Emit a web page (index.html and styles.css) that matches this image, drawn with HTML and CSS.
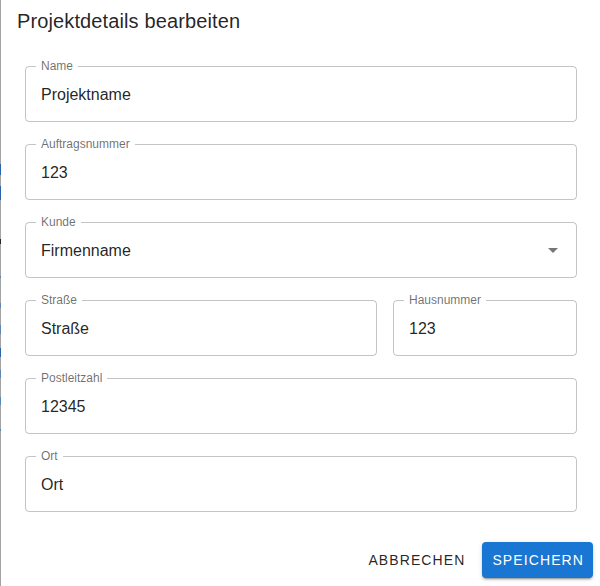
FILE: index.html
```html
<!DOCTYPE html>
<html lang="de">
<head>
<meta charset="utf-8">
<title>Projektdetails bearbeiten</title>
<link rel="stylesheet" href="styles.css">
</head>
<body>
<div class="screen">
  <div class="backdrop"></div>
  <div class="dialog">
    <h2 class="title">Projektdetails bearbeiten</h2>
    <div class="content">
      <div class="field"><span class="label">Name</span><span class="value">Projektname</span></div>
      <div class="field"><span class="label">Auftragsnummer</span><span class="value">123</span></div>
      <div class="field"><span class="label">Kunde</span><span class="value">Firmenname</span>
        <svg class="arrow" viewBox="0 0 24 24" width="24" height="24"><path d="M7 10l5 5 5-5z"/></svg>
      </div>
      <div class="row">
        <div class="field"><span class="label">Straße</span><span class="value">Straße</span></div>
        <div class="field"><span class="label">Hausnummer</span><span class="value">123</span></div>
      </div>
      <div class="field"><span class="label">Postleitzahl</span><span class="value">12345</span></div>
      <div class="field"><span class="label">Ort</span><span class="value">Ort</span></div>
    </div>
    <div class="actions">
      <button class="btn btn-text">Abbrechen</button>
      <button class="btn btn-contained">Speichern</button>
    </div>
  </div>
</div>
</body>
</html>
```
FILE: styles.css
```css
html, body {
  margin: 0;
  padding: 0;
  background: #fff;
}
body {
  font-family: "Liberation Sans", Arial, Helvetica, sans-serif;
  color: rgba(0, 0, 0, 0.87);
  overflow: hidden;
}
.screen {
  display: flex;
  width: 600px;
  height: 586px;
  overflow: hidden;
}
.backdrop {
  flex: 0 0 1px;
  background: linear-gradient(to bottom,
    #a3a3a3 0, #a3a3a3 164px,
    #2a64a8 164px, #2a64a8 175px,
    #a3a3a3 175px, #a3a3a3 186px,
    #2a64a8 186px, #2a64a8 200px,
    #a3a3a3 200px, #a3a3a3 239px,
    #262626 239px, #262626 244px,
    #a3a3a3 244px, #a3a3a3 276px,
    #5d86b8 276px, #5d86b8 278px,
    #a3a3a3 278px, #a3a3a3 303px,
    #5d86b8 303px, #5d86b8 308px,
    #a3a3a3 308px, #a3a3a3 325px,
    #5d86b8 325px, #5d86b8 334px,
    #a3a3a3 334px, #a3a3a3 348px,
    #2a64a8 348px, #2a64a8 357px,
    #a3a3a3 357px, #a3a3a3 370px,
    #5d86b8 370px, #5d86b8 378px,
    #a3a3a3 378px, #a3a3a3 397px,
    #5d86b8 397px, #5d86b8 405px,
    #a3a3a3 405px, #a3a3a3 429px,
    #5d86b8 429px, #5d86b8 431px,
    #a3a3a3 431px, #a3a3a3 100%);
}
.dialog {
  flex: 0 0 600px;
  display: flex;
  flex-direction: column;
  background: #fff;
}
.title {
  margin: 0;
  padding: 5px 16px 0;
  font-size: 20px;
  line-height: 32px;
  font-weight: 400;
  letter-spacing: 0.12px;
  color: rgba(0, 0, 0, 0.87);
}
.content {
  display: flex;
  flex-direction: column;
  gap: 22px;
  padding: 29px 24px 22px;
}
.row {
  display: grid;
  grid-template-columns: 352fr 184fr;
  gap: 16px;
}
.field {
  position: relative;
  box-sizing: border-box;
  height: 56px;
  border: 1px solid rgba(0, 0, 0, 0.23);
  border-radius: 4px;
  display: flex;
  align-items: center;
  padding: 0 14px 0 15px;
}
.label {
  position: absolute;
  top: -8px;
  left: 10px;
  padding: 0 5px;
  background: #fff;
  font-size: 12px;
  line-height: 14px;
  color: rgba(0, 0, 0, 0.58);
  white-space: nowrap;
}
.value {
  flex: 1;
  font-size: 16px;
  line-height: 23px;
  color: rgba(0, 0, 0, 0.87);
}
.arrow {
  flex: 0 0 24px;
  margin-right: -3px;
  fill: rgba(0, 0, 0, 0.54);
}
.actions {
  display: flex;
  justify-content: flex-end;
  align-items: center;
  gap: 9px;
  padding: 8px;
}
.btn {
  font-family: "Liberation Sans", Arial, Helvetica, sans-serif;
  font-size: 14px;
  font-weight: 400;
  letter-spacing: 1.1px;
  text-transform: uppercase;
  height: 36px;
  border: none;
  border-radius: 4px;
  cursor: pointer;
  background: transparent;
}
.btn-text {
  padding: 0 8px;
  color: rgba(0, 0, 0, 0.87);
}
.btn-contained {
  padding: 0 9px 0 10px;
  color: #fff;
  background: #1976d2;
  box-shadow: 0 3px 1px -2px rgba(0,0,0,0.2), 0 2px 2px 0 rgba(0,0,0,0.14), 0 1px 5px 0 rgba(0,0,0,0.12);
}
```
